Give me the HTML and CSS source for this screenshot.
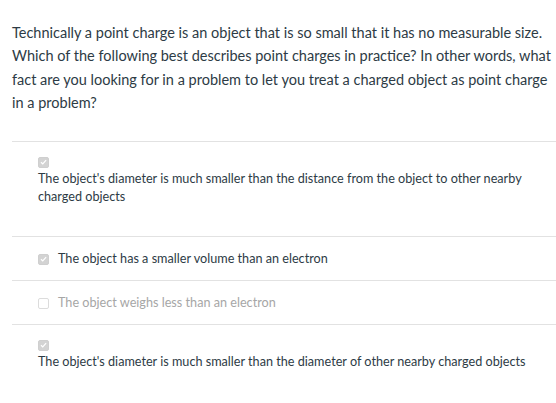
FILE: index.html
```html
<!DOCTYPE html>
<html>
<head>
<meta charset="utf-8">
<link rel="stylesheet" href="styles.css">
</head>
<body>
<div class="quiz">
  <div class="question">Technically a point charge is an object that is so small that it has no measurable size. Which of the following best describes point charges in practice? In other words, what fact are you looking for in a problem to let you treat a charged object as point charge in a problem?</div>
  <div class="answers">
    <div class="answer stacked">
      <div class="box-row"><span class="cb checked"><svg viewBox="0 0 10 10" width="10" height="10"><path d="M2.2 5.2 L4.2 7.1 L7.9 3" fill="none" stroke="#fff" stroke-width="1.4"/></svg></span></div>
      <div class="label">The object's diameter is much smaller than the distance from the object to other nearby charged objects</div>
    </div>
    <div class="answer inline">
      <span class="cb checked"><svg viewBox="0 0 10 10" width="10" height="10"><path d="M2.2 5.2 L4.2 7.1 L7.9 3" fill="none" stroke="#fff" stroke-width="1.4"/></svg></span>
      <span class="label">The object has a smaller volume than an electron</span>
    </div>
    <div class="answer inline muted">
      <span class="cb"></span>
      <span class="label">The object weighs less than an electron</span>
    </div>
    <div class="answer stacked last">
      <div class="box-row"><span class="cb checked"><svg viewBox="0 0 10 10" width="10" height="10"><path d="M2.2 5.2 L4.2 7.1 L7.9 3" fill="none" stroke="#fff" stroke-width="1.4"/></svg></span></div>
      <div class="label">The object's diameter is much smaller than the diameter of other nearby charged objects</div>
    </div>
  </div>
</div>
</body>
</html>
```
FILE: styles.css
```css
html, body {
  margin: 0;
  padding: 0;
  background: #fff;
}
body {
  font-family: Lato, "Open Sans", sans-serif;
  color: #2d3b45;
}
.quiz {
  padding: 21px 0 0 12px;
}
.question {
  font-size: 14.5px;
  line-height: 23.3px;
  padding-right: 4px;
  padding-bottom: 27px;
  border-bottom: 1px solid #e2e2e2;
}
.answer {
  font-size: 12.65px;
  line-height: 18px;
  padding-left: 26px;
  border-bottom: 1px solid #e2e2e2;
}
.answer.stacked {
  padding-top: 12px;
  padding-bottom: 30px;
}
.answer.last {
  border-bottom: none;
}
.box-row {
  height: 16px;
  display: flex;
  align-items: center;
}
.answer.inline {
  display: flex;
  align-items: center;
  gap: 9px;
  padding-top: 13px;
  padding-bottom: 12px;
}
.cb {
  box-sizing: border-box;
  width: 11px;
  height: 11px;
  border-radius: 2px;
  border: 1px solid #dcdcdc;
  background: #fff;
  display: inline-flex;
  align-items: center;
  justify-content: center;
  flex: none;
}
.cb.checked {
  background: #d3d3d3;
  border-color: #cfcfcf;
}
.cb svg {
  display: block;
}
.muted .label {
  color: #a6a6a6;
}
```
